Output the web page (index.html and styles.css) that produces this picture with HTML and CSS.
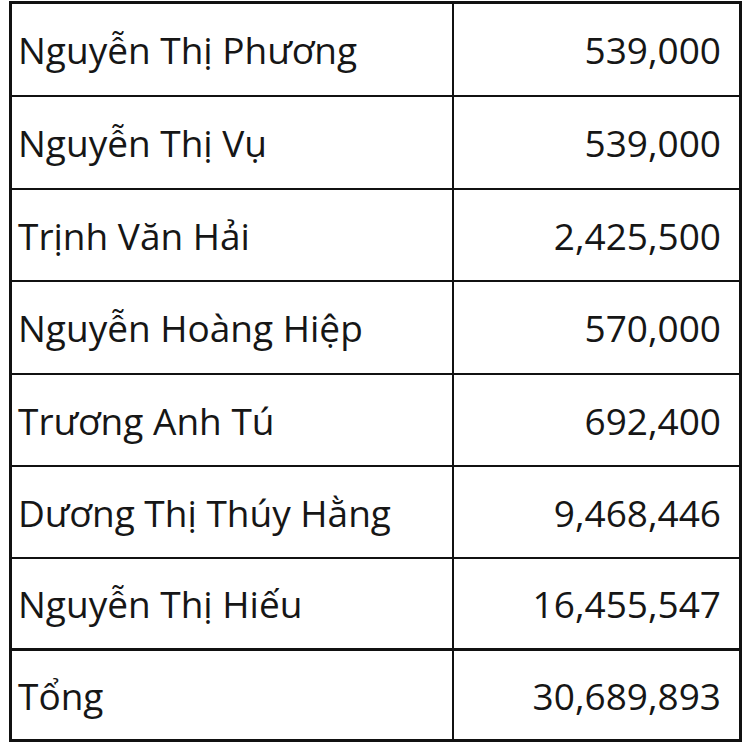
FILE: index.html
```html
<!DOCTYPE html>
<html lang="vi">
<head>
<meta charset="utf-8">
<title>Bảng</title>
<link rel="stylesheet" href="styles.css">
</head>
<body>
<div class="sheet">
  <div class="cell name">Nguyễn Thị Phương</div><div class="cell num">539,000</div>
  <div class="cell name">Nguyễn Thị Vụ</div><div class="cell num">539,000</div>
  <div class="cell name">Trịnh Văn Hải</div><div class="cell num">2,425,500</div>
  <div class="cell name">Nguyễn Hoàng Hiệp</div><div class="cell num">570,000</div>
  <div class="cell name">Trương Anh Tú</div><div class="cell num">692,400</div>
  <div class="cell name">Dương Thị Thúy Hằng</div><div class="cell num">9,468,446</div>
  <div class="cell name">Nguyễn Thị Hiếu</div><div class="cell num">16,455,547</div>
  <div class="cell name total">Tổng</div><div class="cell num total">30,689,893</div>
</div>
</body>
</html>
```
FILE: styles.css
```css
html, body {
  margin: 0;
  padding: 0;
  background: #fff;
}
.sheet {
  margin: 1px 0 0 9px;
  width: 733px;
  box-sizing: border-box;
  display: grid;
  grid-template-columns: 440px 285px;
  grid-template-rows: 91px 91px 90px 91px 90px 90px 89px 89px;
  column-gap: 2px;
  row-gap: 2px;
  padding: 3px;
  background: #111;
  font-family: "Open Sans", "Noto Sans", sans-serif;
  font-size: 37px;
  color: #161616;
}
.cell {
  background: #fff;
  display: flex;
  align-items: center;
  white-space: nowrap;
}
.name {
  padding-left: 6px;
}
.num {
  justify-content: flex-end;
  padding-right: 18px;
}
.total {
  margin-top: 1px;
}
```
